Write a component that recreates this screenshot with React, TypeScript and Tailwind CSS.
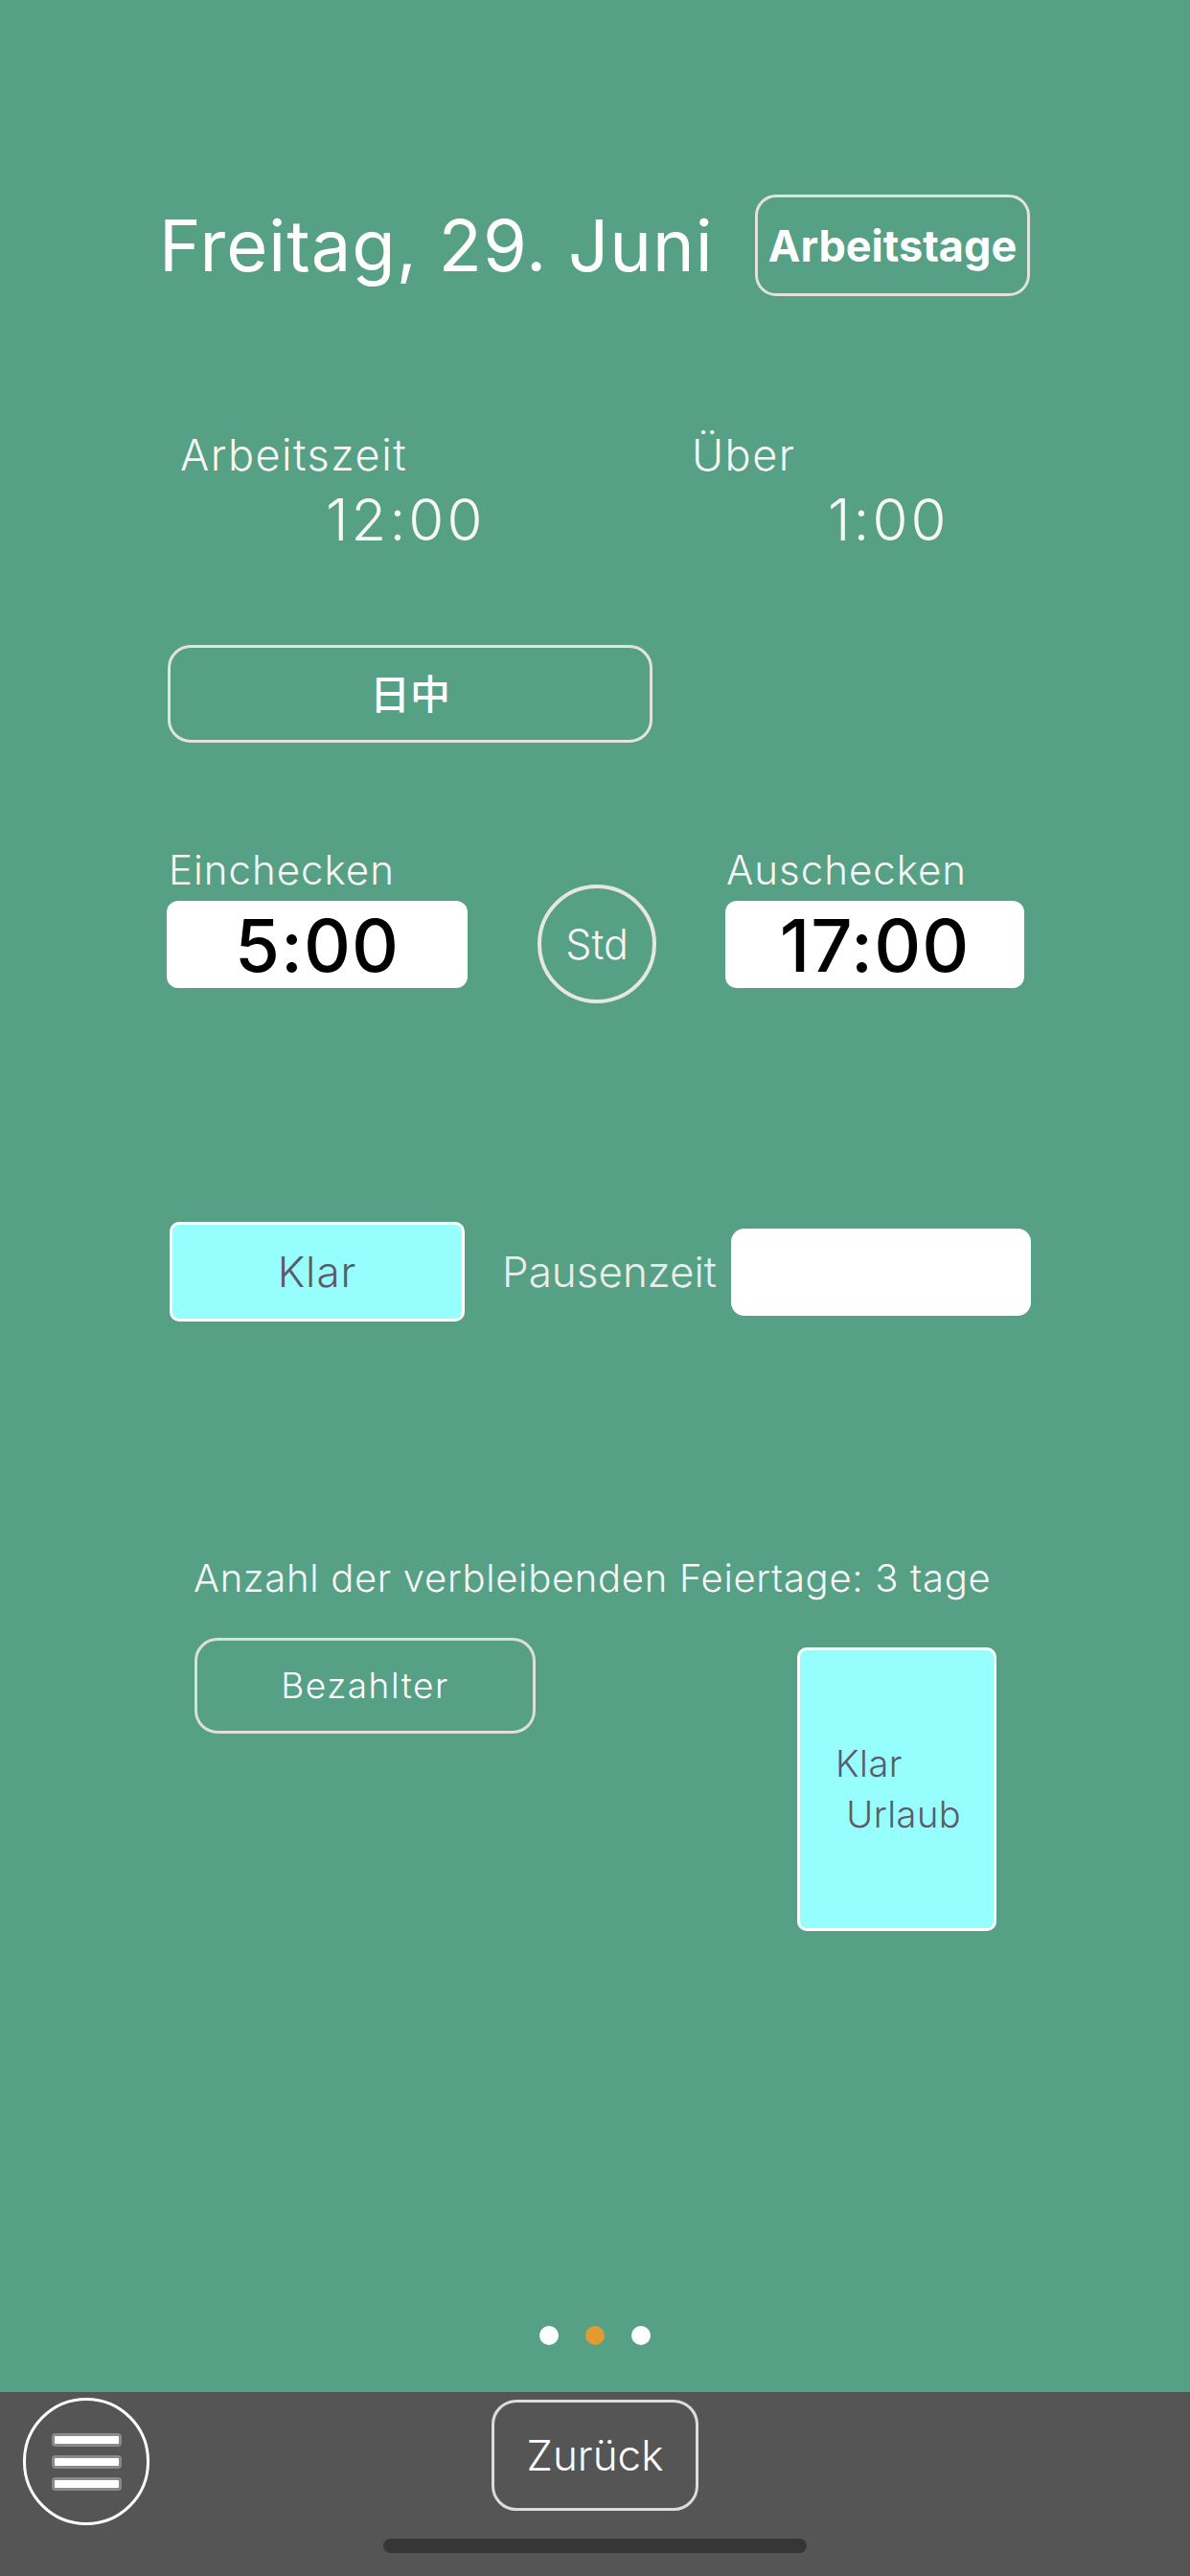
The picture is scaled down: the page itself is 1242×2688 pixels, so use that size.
import React from 'react';

const Dot = ({ active }: { active?: boolean }) => (
  <span className={active ? 'w-[20px] h-[20px] rounded-full bg-[#e39b2f]' : 'w-[20px] h-[20px] rounded-full bg-white'} />
);

const MenuBar = () => (
  <span className="w-[73px] h-[14px] bg-white border-[3px] border-[#8a8a8a] rounded-[4px]" />
);

export default function App() {
  return (
    <div className="w-[1242px] h-[2688px] flex flex-col overflow-hidden bg-[#56a085] text-[#f7f7f7] font-['Inter','Noto_Sans_CJK_JP',sans-serif]">
      <main className="flex-1 flex flex-col">
        {/* date + Arbeitstage */}
        <div className="mt-[203px] h-[106px] flex items-center">
          <h1 className="ml-[166px] text-[74px] leading-none tracking-[1px] text-white">Freitag, 29. Juni</h1>
          <button className="ml-auto mr-[167px] w-[287px] h-[106px] rounded-[22px] border-[3px] border-[#e2e2e2] text-[45px] font-bold text-white leading-none">
            Arbeitstage
          </button>
        </div>

        {/* Arbeitszeit / Über */}
        <div className="mt-[143px] flex">
          <div className="ml-[188px] w-[534px]">
            <p className="text-[45px] leading-none font-light tracking-[1.5px]">Arbeitszeit</p>
            <p className="mt-[15px] ml-[152px] text-[60px] leading-none font-light tracking-[3px]">12:00</p>
          </div>
          <div>
            <p className="text-[45px] leading-none font-light tracking-[1.5px]">Über</p>
            <p className="mt-[15px] ml-[142px] text-[60px] leading-none font-light tracking-[3px]">1:00</p>
          </div>
        </div>

        <button className="mt-[101px] ml-[175px] w-[506px] h-[102px] rounded-[24px] border-[3px] border-[#e2e2e2] flex items-center justify-center text-[42px] font-medium text-white">
          日中
        </button>

        {/* check in / out */}
        <div className="mt-[112px] flex items-end">
          <div className="ml-[174px] w-[314px]">
            <p className="pl-[2px] text-[42px] leading-none font-light tracking-[1px]">Einchecken</p>
            <div className="mt-[11px] h-[91px] bg-white rounded-[12px] flex items-center justify-center text-[76px] leading-none font-medium tracking-[1px] text-black">
              5:00
            </div>
          </div>
          <div className="ml-[73px] mb-[-16px] w-[124px] h-[124px] rounded-full border-[4px] border-[#e6e6e6] flex items-center justify-center text-[43px] font-light">
            Std
          </div>
          <div className="ml-[72px] w-[312px]">
            <p className="pl-[1px] text-[42px] leading-none font-light tracking-[1px]">Auschecken</p>
            <div className="mt-[11px] h-[91px] bg-white rounded-[12px] flex items-center justify-center text-[76px] leading-none font-medium tracking-[1px] text-black">
              17:00
            </div>
          </div>
        </div>

        {/* Klar / Pausenzeit */}
        <div className="mt-[244px] h-[104px] flex items-center">
          <button className="ml-[177px] w-[308px] h-[104px] bg-[#96fffd] border-[3px] border-white rounded-[10px] text-[44px] font-light tracking-[1px] text-[#5d5b6b]">
            Klar
          </button>
          <span className="ml-[39px] text-[44px] font-light text-[#ececec]">Pausenzeit</span>
          <div className="ml-auto mr-[166px] w-[313px] h-[91px] bg-white rounded-[14px]" />
        </div>

        <p className="mt-[248px] ml-[202px] text-[40px] leading-none font-light tracking-[0.7px]">
          Anzahl der verbleibenden Feiertage: 3 tage
        </p>

        <div className="mt-[42px] flex items-start">
          <button className="ml-[203px] w-[356px] h-[100px] rounded-[24px] border-[3px] border-[#dedede] text-[37px] font-light tracking-[1.5px] text-white">
            Bezahlter
          </button>
          <div className="ml-[273px] mt-[10px] w-[208px] h-[296px] bg-[#96fffd] border-[3px] border-white rounded-[10px] flex items-center pl-[37px] text-[38px] leading-[53px] whitespace-pre font-light tracking-[0.5px] text-[#5d5b6b]">
            {'Klar\n Urlaub'}
          </div>
        </div>

        <div className="mt-auto mb-[49px] flex justify-center gap-[28px]">
          <Dot />
          <Dot active />
          <Dot />
        </div>
      </main>

      {/* bottom bar */}
      <footer className="h-[192px] bg-[#555555] flex flex-col">
        <div className="mt-[6px] h-[133px] grid grid-cols-3">
          <button className="ml-[24px] w-[132px] h-[133px] rounded-full border-[3px] border-white flex flex-col items-center justify-center gap-[9px]">
            <MenuBar />
            <MenuBar />
            <MenuBar />
          </button>
          <button className="justify-self-center mt-[2px] w-[216px] h-[116px] rounded-[26px] border-[3px] border-[#dcdcdc] text-[44px] font-light text-white">
            Zurück
          </button>
        </div>
        <div className="mt-[14px] self-center w-[442px] h-[15px] rounded-full bg-[#363636]" />
      </footer>
    </div>
  );
}
